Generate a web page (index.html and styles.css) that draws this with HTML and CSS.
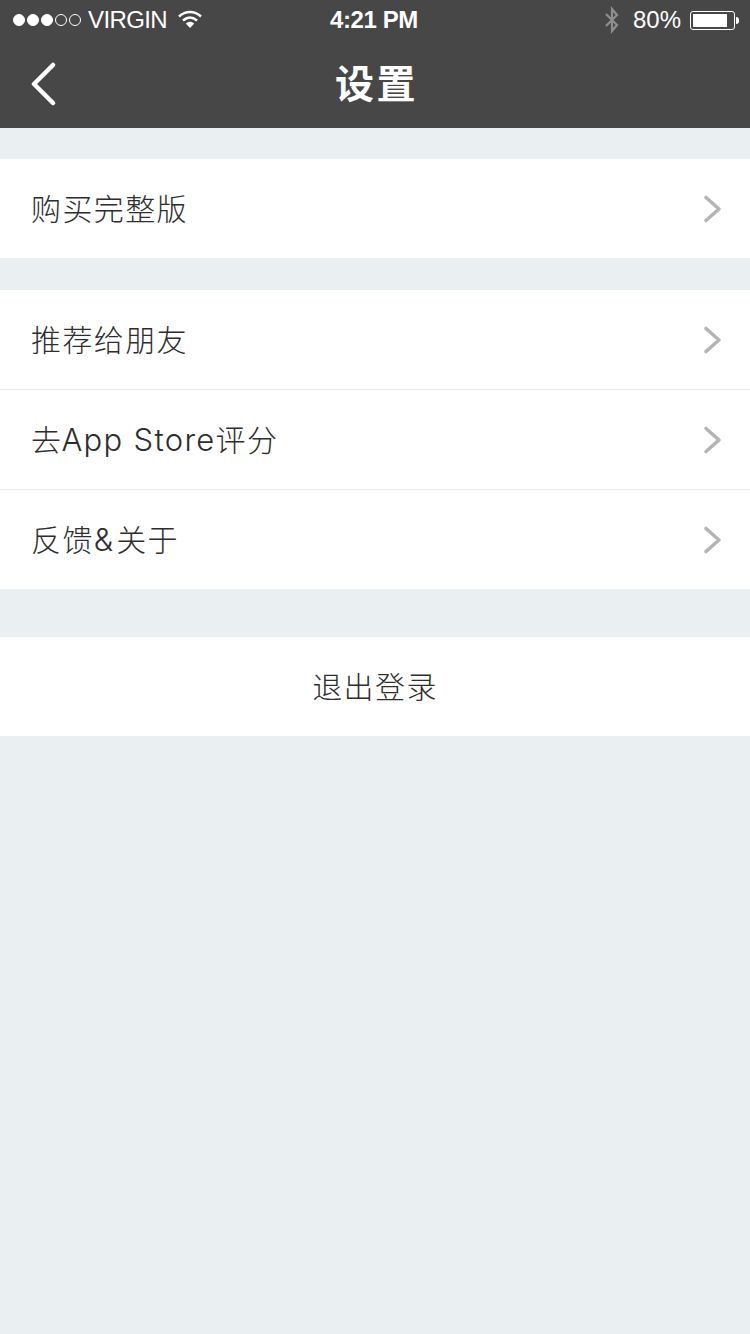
FILE: index.html
```html
<!DOCTYPE html>
<html lang="zh">
  <head>
    <meta charset="UTF-8" />
    <meta name="viewport" content="width=device-width, initial-scale=1.0" />
    <link rel="stylesheet" href="styles.css">
    <title>设置</title>
  </head>
  <body>
    <header class="header">
      <div class="status">
        <div class="status-left">
          <span class="signal">
            <i class="dot on"></i><i class="dot on"></i><i class="dot on"></i><i class="dot"></i><i class="dot"></i>
          </span>
          <span class="carrier">VIRGIN</span>
          <svg class="wifi" width="26" height="20" viewBox="0 0 26 20">
            <path d="M2 7.5C8.5 1.5 17.5 1.5 24 7.5" fill="none" stroke="#fff" stroke-width="2.4"/>
            <path d="M6 11.5C10.5 7.5 15.5 7.5 20 11.5" fill="none" stroke="#fff" stroke-width="2.4"/>
            <path d="M8.8 14.4C11.5 12.3 14.5 12.3 17.2 14.4L13 19Z" fill="#fff"/>
          </svg>
        </div>
        <div class="time">4:21 PM</div>
        <div class="status-right">
          <svg class="bluetooth" width="18" height="28" viewBox="0 0 18 28">
            <path d="M3 8L14 19L9 25V3L14 9L3 20" fill="none" stroke="#8e8e8e" stroke-width="2.2"/>
          </svg>
          <span class="percent">80%</span>
          <span class="battery"><span class="battery-fill"></span></span>
          <span class="battery-tip"></span>
        </div>
      </div>
      <div class="navbar">
        <svg class="back" width="26" height="44" viewBox="0 0 26 44">
          <path d="M23 3L4 22L23 41" fill="none" stroke="#fff" stroke-width="4.5" stroke-linecap="round" stroke-linejoin="round"/>
        </svg>
        <h1 class="title">设置</h1>
      </div>
    </header>

    <main class="content">
      <section class="group group-first">
        <div class="row">
          <span class="label">购买完整版</span>
          <svg class="chevron" width="20" height="30" viewBox="0 0 20 30"><path d="M4 3.5L17 15L4 26.5" fill="none" stroke="#b5b5b5" stroke-width="3.6" stroke-linecap="round" stroke-linejoin="round"/></svg>
        </div>
      </section>

      <section class="group group-second">
        <div class="row">
          <span class="label">推荐给朋友</span>
          <svg class="chevron" width="20" height="30" viewBox="0 0 20 30"><path d="M4 3.5L17 15L4 26.5" fill="none" stroke="#b5b5b5" stroke-width="3.6" stroke-linecap="round" stroke-linejoin="round"/></svg>
        </div>
        <div class="row">
          <span class="label">去<span class="latin">App Store</span>评分</span>
          <svg class="chevron" width="20" height="30" viewBox="0 0 20 30"><path d="M4 3.5L17 15L4 26.5" fill="none" stroke="#b5b5b5" stroke-width="3.6" stroke-linecap="round" stroke-linejoin="round"/></svg>
        </div>
        <div class="row">
          <span class="label">反馈<span class="latin amp">&amp;</span>关于</span>
          <svg class="chevron" width="20" height="30" viewBox="0 0 20 30"><path d="M4 3.5L17 15L4 26.5" fill="none" stroke="#b5b5b5" stroke-width="3.6" stroke-linecap="round" stroke-linejoin="round"/></svg>
        </div>
      </section>

      <section class="group group-logout">
        <div class="row row-center"><span class="label">退出登录</span></div>
      </section>
    </main>
  </body>
</html>
```

FILE: styles.css
```css
html,
body {
  margin: 0;
  height: 100%;
}

body {
  height: 1334px;
  overflow: hidden;
  background: #eaeff2;
  font-family: "Liberation Sans", "Noto Sans CJK SC", sans-serif;
}

.header {
  height: 128px;
  background: #474747;
  color: #fff;
}

.status {
  height: 40px;
  display: flex;
  align-items: center;
  justify-content: space-between;
  position: relative;
  padding: 0 11px 0 13px;
  font-size: 24px;
}

.status-left,
.status-right {
  display: flex;
  align-items: center;
}

.signal {
  display: flex;
  gap: 2px;
}

.dot {
  width: 10px;
  height: 10px;
  border: 1px solid #fff;
  border-radius: 50%;
}

.dot.on {
  background: #fff;
}

.carrier {
  margin-left: 7px;
  letter-spacing: -0.6px;
}

.wifi {
  margin-left: 10px;
  margin-bottom: 2px;
}

.time {
  position: absolute;
  left: -2px;
  right: 0;
  text-align: center;
  font-size: 24px;
  font-weight: bold;
  letter-spacing: -0.4px;
}

.bluetooth {
  margin-right: 12px;
}

.percent {
  margin-right: 9px;
}

.battery {
  display: block;
  width: 45px;
  height: 19px;
  box-sizing: border-box;
  border: 1px solid #fff;
  border-radius: 3px;
  padding: 2px;
}

.battery-fill {
  display: block;
  width: 34px;
  height: 13px;
  background: #fff;
}

.battery-tip {
  width: 3px;
  height: 7px;
  margin-left: 1px;
  background: #fff;
  border-radius: 0 3px 3px 0;
}

.navbar {
  height: 88px;
  display: flex;
  align-items: center;
  justify-content: center;
  position: relative;
}

.back {
  position: absolute;
  left: 30px;
  top: 22px;
}

.title {
  margin: 0 0 7px 3px;
  font-size: 39px;
  font-weight: bold;
  letter-spacing: 2.5px;
}

.group {
  background: #fff;
}

.group-first {
  margin-top: 31px;
}

.group-second {
  margin-top: 32px;
}

.group-logout {
  margin-top: 48px;
}

.row {
  height: 99px;
  display: flex;
  align-items: center;
  justify-content: space-between;
  padding: 0 28px 0 31px;
  font-size: 30px;
  letter-spacing: 1.4px;
  font-weight: 300;
  color: #2e2e2e;
}

.row + .row {
  border-top: 1px solid #ebebeb;
}

.row-center {
  justify-content: center;
  padding: 0;
}

.label {
  margin-bottom: 3px;
}

.latin {
  margin-left: -1px;
  font-family: Inter, "Liberation Sans", sans-serif;
  font-size: 31px;
  letter-spacing: 1.3px;
}

.amp {
  margin-left: 0;
  letter-spacing: 3px;
}

.chevron {
  display: block;
}
```
